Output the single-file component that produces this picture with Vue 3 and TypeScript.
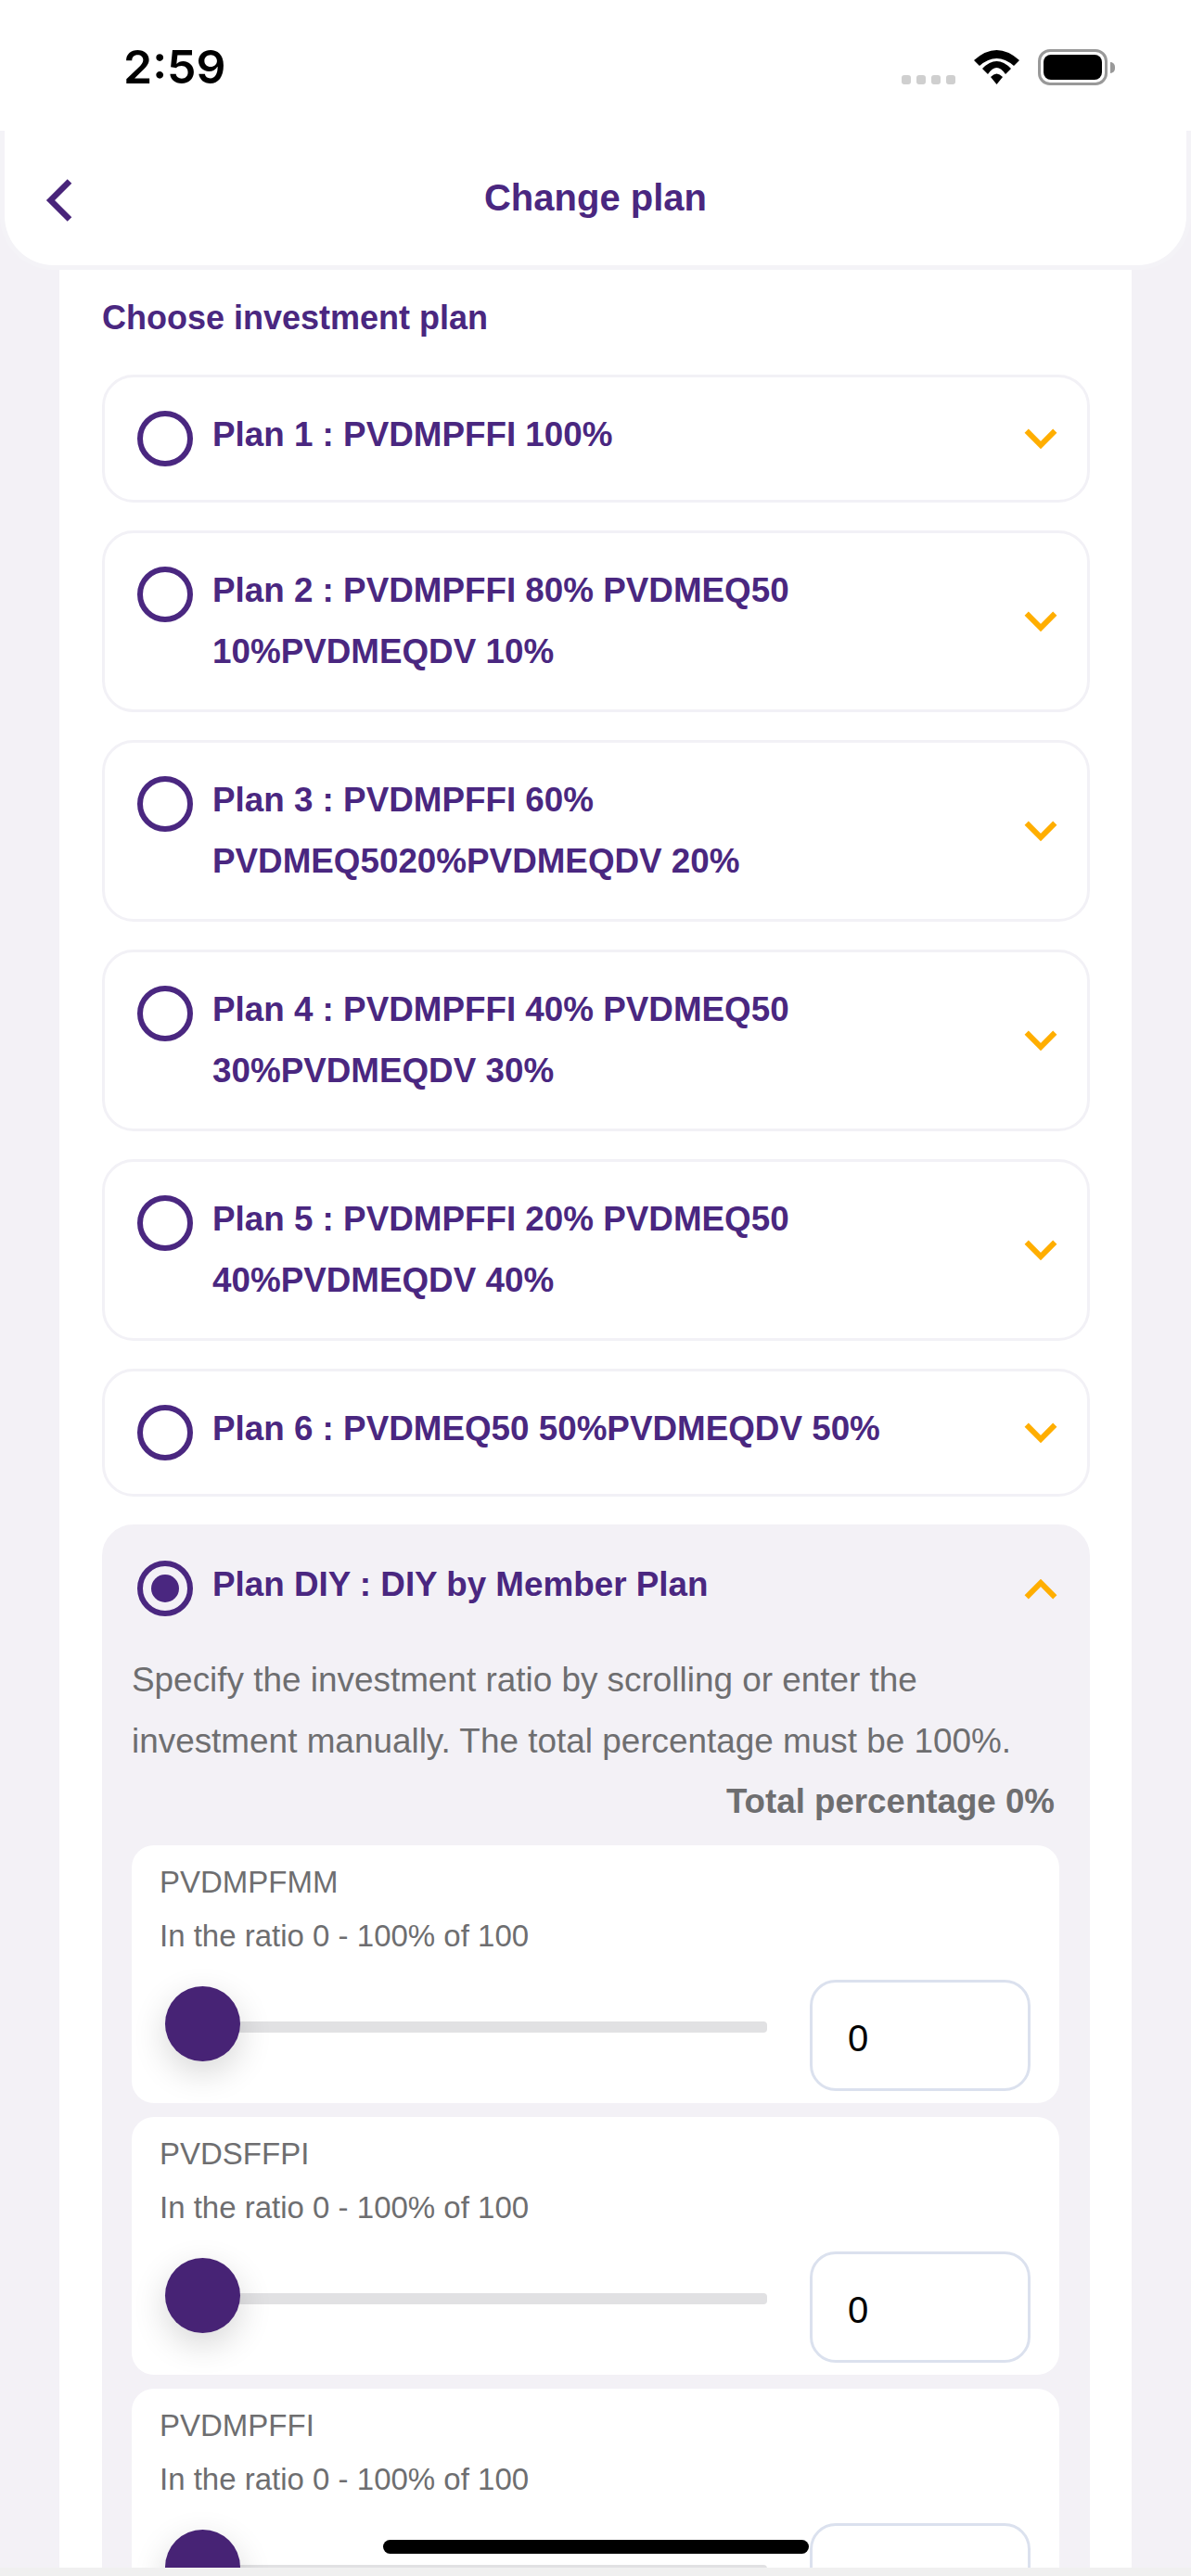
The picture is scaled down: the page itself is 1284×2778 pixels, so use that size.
<script setup lang="ts">
const plans: string[] = [
  'Plan 1 : PVDMPFFI 100%',
  'Plan 2 : PVDMPFFI 80% PVDMEQ50 10%PVDMEQDV 10%',
  'Plan 3 : PVDMPFFI 60% PVDMEQ5020%PVDMEQDV 20%',
  'Plan 4 : PVDMPFFI 40% PVDMEQ50 30%PVDMEQDV 30%',
  'Plan 5 : PVDMPFFI 20% PVDMEQ50 40%PVDMEQDV 40%',
  'Plan 6 : PVDMEQ50 50%PVDMEQDV 50%',
]
const funds: string[] = ['PVDMPFMM', 'PVDSFFPI', 'PVDMPFFI']
</script>

<template>
  <div class="screen">
    <div class="status">
      <span class="time">2:59</span>
      <div class="status-icons">
        <div class="dots"><i></i><i></i><i></i><i></i></div>
        <svg class="wifi" width="49" height="37" viewBox="0 0 49 37">
          <path d="M0 11Q24.5-11 49 11L43 17Q24.5 1 6 17Z" />
          <path d="M9 20Q24.5 4 40 20L34 26Q24.5 12 15 26Z" />
          <path d="M18 29Q24.5 22 31 29L24.5 37Z" />
        </svg>
        <div class="battery"><div class="battery-fill"></div></div>
        <div class="battery-nub"></div>
      </div>
    </div>

    <header class="bar">
      <svg class="back" width="30" height="48" viewBox="0 0 30 48">
        <path d="M26 3.5 5.5 24 26 44.5" />
      </svg>
      <h1 class="title">Change plan</h1>
      <span></span>
    </header>

    <div class="scroll">
      <main class="panel">
        <h2 class="choose">Choose investment plan</h2>

        <div v-for="plan in plans" :key="plan" class="plan">
          <div class="plan-head">
            <span class="radio"></span>
            <span class="plan-name">{{ plan }}</span>
            <svg class="chev" width="36" height="23" viewBox="0 0 36 23">
              <path d="M2.7 2.7 18 18 33.3 2.7" />
            </svg>
          </div>
        </div>

        <div class="plan plan-open">
          <div class="plan-head">
            <span class="radio radio-on"></span>
            <span class="plan-name">Plan DIY : DIY by Member Plan</span>
            <svg class="chev chev-up" width="36" height="23" viewBox="0 0 36 23">
              <path d="M2.7 2.7 18 18 33.3 2.7" />
            </svg>
          </div>
          <div class="diy">
            <p class="desc">Specify the investment ratio by scrolling or enter the investment manually. The total percentage must be 100%.</p>
            <p class="total">Total percentage 0%</p>
            <div v-for="fund in funds" :key="fund" class="fund">
              <div class="fund-name">{{ fund }}</div>
              <div class="fund-ratio">In the ratio 0 - 100% of 100</div>
              <div class="fund-row">
                <div class="slider">
                  <div class="track"></div>
                  <div class="thumb"></div>
                </div>
                <div class="amount">0</div>
              </div>
            </div>
          </div>
        </div>
      </main>
    </div>

    <div class="strip"></div>
    <div class="home"></div>
  </div>
</template>

<style scoped>
.screen {
  position: relative;
  display: flex;
  flex-direction: column;
  width: 1284px;
  height: 2778px;
  overflow: hidden;
  background: #f3f1f6;
  font-family: "Liberation Sans", Arial, sans-serif;
}
.status {
  flex: none;
  display: flex;
  justify-content: space-between;
  height: 141px;
  padding: 0 82px 0 133px;
  box-sizing: border-box;
  background: #fff;
}
.time {
  margin-top: 42px;
  font-family: Inter, sans-serif;
  font-size: 50px;
  font-weight: 600;
  line-height: 60px;
  color: #000;
}
.status-icons {
  display: flex;
  align-items: flex-start;
  margin-top: 53px;
}
.dots {
  display: flex;
  gap: 6px;
  margin-top: 28px;
}
.dots i {
  width: 10px;
  height: 10px;
  border-radius: 3px;
  background: #cfcfcf;
}
.wifi {
  margin: 1px 20px 0 20px;
  fill: #000;
}
.battery {
  box-sizing: border-box;
  width: 75px;
  height: 39px;
  padding: 3px;
  border: 3px solid #999;
  border-radius: 13px;
}
.battery-fill {
  width: 100%;
  height: 100%;
  border-radius: 8px;
  background: #000;
}
.battery-nub {
  width: 5px;
  height: 12px;
  margin: 14px 0 0 3px;
  border-radius: 0 6px 6px 0;
  background: #999;
}
.bar {
  flex: none;
  display: grid;
  grid-template-columns: 1fr auto 1fr;
  align-items: center;
  box-sizing: border-box;
  height: 150px;
  padding: 0 44px;
  border: 5px solid #f4f3f7;
  border-top: 0;
  border-radius: 0 0 58px 58px;
  background: #fff;
}
.back {
  margin-top: 4px;
  fill: none;
  stroke: #48247a;
  stroke-width: 6.5;
}
.title {
  margin: 0;
  font-size: 40px;
  font-weight: 700;
  color: #4a2780;
}
.scroll {
  flex: 1;
  min-height: 0;
  overflow: hidden;
}
.panel {
  box-sizing: border-box;
  width: 1156px;
  margin-left: 64px;
  padding: 19px 45px 40px 46px;
  background: #fff;
}
.choose {
  margin: 0 0 28px;
  font-size: 36px;
  font-weight: 700;
  line-height: 66px;
  color: #4a2780;
}
.plan {
  box-sizing: border-box;
  margin-bottom: 30px;
  border: 3px solid #f2f1f6;
  border-radius: 34px;
  background: #fff;
}
.plan-open {
  margin-bottom: 0;
  border-color: #f3f1f6;
  background: #f3f1f6;
}
.plan-head {
  display: flex;
  align-items: flex-start;
  padding: 29px 32px 29px 35px;
}
.radio {
  flex: none;
  box-sizing: border-box;
  display: flex;
  align-items: center;
  justify-content: center;
  width: 60px;
  height: 60px;
  margin: 7px 21px 7px 0;
  border: 6px solid #4a2780;
  border-radius: 50%;
}
.radio-on::after {
  content: "";
  width: 30px;
  height: 30px;
  border-radius: 50%;
  background: #4a2780;
}
.plan-name {
  flex: 1;
  font-size: 36.8px;
  font-weight: 700;
  line-height: 66px;
  color: #4a2780;
}
.chev {
  flex: none;
  align-self: center;
  margin-left: 24px;
  fill: none;
  stroke: #ffae00;
  stroke-width: 6;
}
.chev-up {
  transform: scaleY(-1);
}
.diy {
  padding: 0 30px 0 29px;
}
.desc {
  margin: 0;
  font-size: 36.9px;
  line-height: 66px;
  color: #6e6e70;
}
.total {
  margin: -1px 5px 14px 0;
  font-size: 36.7px;
  font-weight: 700;
  line-height: 66px;
  text-align: right;
  color: #6e6e70;
}
.fund {
  box-sizing: border-box;
  height: 278px;
  margin-bottom: 15px;
  padding: 11px 31px 0 30px;
  border-radius: 24px;
  background: #fff;
}
.fund-name,
.fund-ratio {
  font-size: 33px;
  line-height: 58px;
  color: #6e6e70;
}
.fund-row {
  display: flex;
  align-items: flex-start;
  margin-top: 18px;
}
.slider {
  position: relative;
  flex: 1;
  margin: 7px 46px 0 6px;
  height: 81px;
}
.track {
  margin-top: 38px;
  height: 12px;
  border-radius: 4px;
  background: #e1e1e3;
}
.thumb {
  position: absolute;
  left: 0;
  top: 0;
  width: 81px;
  height: 81px;
  border-radius: 50%;
  background: #472375;
  box-shadow: 0 12px 36px rgba(0, 0, 0, 0.16);
}
.amount {
  flex: none;
  box-sizing: border-box;
  width: 238px;
  height: 120px;
  padding-left: 38px;
  border: 3px solid #dbe1ee;
  border-radius: 28px;
  font-size: 40px;
  line-height: 120px;
  color: #000;
  background: #fff;
}
.strip {
  flex: none;
  height: 9px;
  background: #f0f0f0;
}
.home {
  position: absolute;
  left: 413px;
  top: 2739px;
  width: 459px;
  height: 15px;
  border-radius: 8px;
  background: #000;
}
</style>
